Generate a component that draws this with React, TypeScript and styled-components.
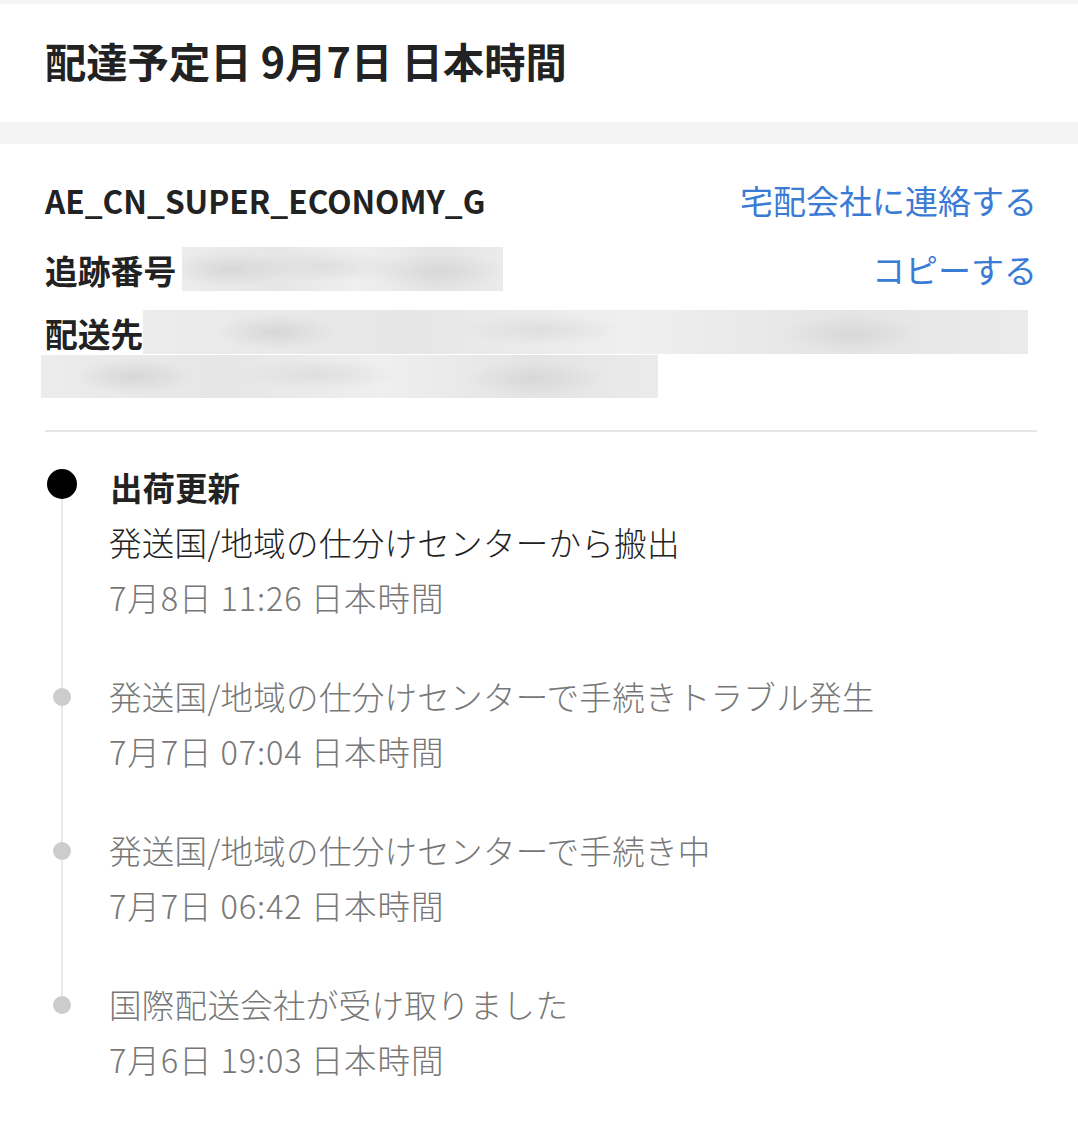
import styled, { createGlobalStyle } from "styled-components";

const GlobalStyle = createGlobalStyle`
  html, body {
    margin: 0;
    padding: 0;
    background: #f4f4f4;
  }
  body {
    font-family: "Noto Sans CJK JP", "Noto Sans", sans-serif;
    color: #222;
  }
`;

const Page = styled.div`
  width: 1078px;
  padding-top: 4px;
  background: #f4f4f4;
`;

const HeaderCard = styled.div`
  height: 118px;
  background: #fff;
  display: flex;
  align-items: center;
  padding: 0 45px 6px;
  box-sizing: border-box;
`;

const Title = styled.h1`
  margin: 0;
  font-size: 41.3px;
  font-weight: 700;
  color: #222;
`;

const DetailCard = styled.div`
  margin-top: 22px;
  background: #fff;
  padding: 34px 41px 40px 45px;
  min-height: 986px;
  box-sizing: border-box;
`;

const InfoRow = styled.div<{ $gap?: number }>`
  display: flex;
  align-items: center;
  height: 44px;
  margin-top: ${({ $gap }) => $gap ?? 0}px;
`;

const Carrier = styled.div`
  font-size: 31.6px;
  font-weight: 700;
  flex: 1;
`;

const Label = styled.span`
  font-size: 32.8px;
  font-weight: 700;
  white-space: nowrap;
`;

const Link = styled.a`
  margin-left: auto;
  font-size: 33px;
  color: #3a7bd5;
  text-decoration: none;
  white-space: nowrap;
`;

const Blurred = styled.div<{ $width?: number; $offset?: number }>`
  height: 44px;
  width: ${({ $width }) => ($width ? `${$width}px` : "auto")};
  flex: ${({ $width }) => ($width ? "none" : "1")};
  margin-left: ${({ $offset }) => $offset ?? 6}px;
  background:
    radial-gradient(ellipse 60px 18px at 15% 50%, rgba(200, 200, 200, 0.55), transparent),
    radial-gradient(ellipse 80px 16px at 45% 45%, rgba(210, 210, 210, 0.5), transparent),
    radial-gradient(ellipse 70px 18px at 80% 55%, rgba(205, 205, 205, 0.55), transparent),
    linear-gradient(90deg, #ececec, #e6e6e6 30%, #efefef 55%, #e4e4e4 80%, #ebebeb);
`;

const AddressRow = styled(InfoRow)`
  padding-right: 9px;
`;

const AddressTail = styled(Blurred)`
  height: 43px;
  margin-top: 1px;
`;

const Divider = styled.hr`
  border: none;
  border-top: 2px solid #e6e6e6;
  margin: 32px 0 0 0;
`;

const Timeline = styled.ol`
  list-style: none;
  margin: 0;
  padding: 27px 0 0 0;
`;

const Event = styled.li`
  position: relative;
  padding-left: 66px;
  padding-bottom: 44px;
  font-size: 32.5px;
  line-height: 55px;

  &::after {
    content: "";
    position: absolute;
    left: 16px;
    top: 28px;
    bottom: -28px;
    width: 2px;
    background: #e8e8e8;
  }

  &:last-child::after {
    display: none;
  }
`;

const Dot = styled.span<{ $active?: boolean }>`
  position: absolute;
  z-index: 1;
  left: ${({ $active }) => ($active ? 2 : 8)}px;
  top: ${({ $active }) => ($active ? 10 : 20)}px;
  width: ${({ $active }) => ($active ? 30 : 18)}px;
  height: ${({ $active }) => ($active ? 30 : 18)}px;
  border-radius: 50%;
  background: ${({ $active }) => ($active ? "#000" : "#cccccc")};
`;

const EventTitle = styled.div`
  font-weight: 700;
  color: #222;
  font-size: 32.5px;
  margin-left: -1px;
`;

const EventText = styled.div<{ $active?: boolean }>`
  color: ${({ $active }) => ($active ? "#222" : "#777")};
  font-weight: 300;
  margin-left: -2px;
  letter-spacing: 0.3px;
`;

const EventTime = styled.div`
  color: #777;
  font-weight: 300;
  margin-left: -2px;
  letter-spacing: 0.9px;
`;

const events = [
  { title: "出荷更新", text: "発送国/地域の仕分けセンターから搬出", time: "7月8日 11:26 日本時間" },
  { text: "発送国/地域の仕分けセンターで手続きトラブル発生", time: "7月7日 07:04 日本時間" },
  { text: "発送国/地域の仕分けセンターで手続き中", time: "7月7日 06:42 日本時間" },
  { text: "国際配送会社が受け取りました", time: "7月6日 19:03 日本時間" },
];

export default function App() {
  return (
    <Page>
      <GlobalStyle />
      <HeaderCard>
        <Title>配達予定日 9月7日 日本時間</Title>
      </HeaderCard>
      <DetailCard>
        <InfoRow>
          <Carrier>AE_CN_SUPER_ECONOMY_G</Carrier>
          <Link href="#">宅配会社に連絡する</Link>
        </InfoRow>
        <InfoRow $gap={25}>
          <Label>追跡番号</Label>
          <Blurred $width={321} />
          <Link href="#">コピーする</Link>
        </InfoRow>
        <AddressRow $gap={19}>
          <Label>配送先</Label>
          <Blurred $offset={0} />
        </AddressRow>
        <AddressTail $width={617} $offset={-4} />
        <Divider />
        <Timeline>
          {events.map((e, i) => {
            const active = i === 0;
            return (
              <Event key={i}>
                <Dot $active={active} />
                {e.title && <EventTitle>{e.title}</EventTitle>}
                <EventText $active={active}>{e.text}</EventText>
                <EventTime>{e.time}</EventTime>
              </Event>
            );
          })}
        </Timeline>
      </DetailCard>
    </Page>
  );
}
